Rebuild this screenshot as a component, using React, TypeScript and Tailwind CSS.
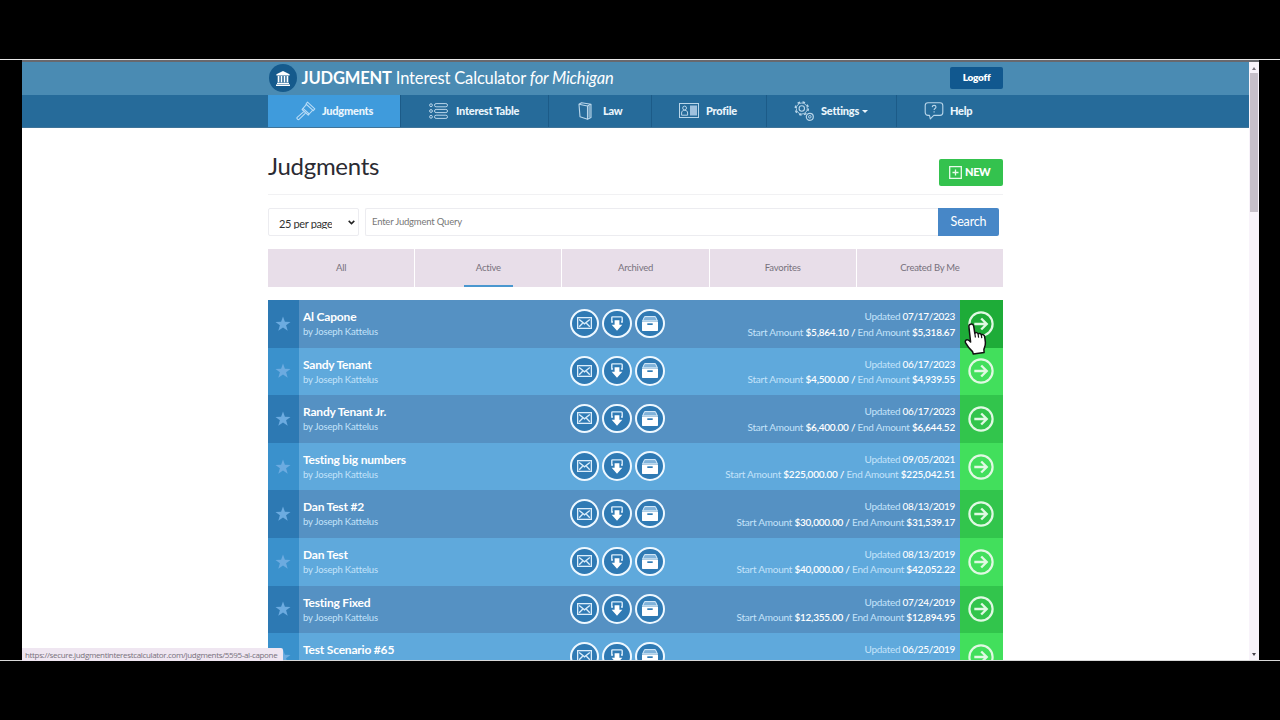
import type { ReactNode } from 'react'

type Judgment = {
  name: string
  author?: string
  updated: string
  start?: string
  end?: string
}

const navItems = [
  { label: 'Judgments', width: 'w-[133px]', pad: 'pl-[28px]', gap: 'gap-[6px]', icon: <GavelIcon />, active: true },
  { label: 'Interest Table', width: 'w-[148px]', pad: 'pl-[27px]', gap: 'gap-[8px]', icon: <ListIcon /> },
  { label: 'Law', width: 'w-[103px]', pad: 'pl-[26px]', gap: 'gap-[8px]', icon: <BookIcon /> },
  { label: 'Profile', width: 'w-[115px]', pad: 'pl-[27px]', gap: 'gap-[7px]', icon: <CardIcon /> },
  { label: 'Settings', width: 'w-[130px]', pad: 'pl-[27px]', gap: 'gap-[7px]', icon: <CogsIcon />, caret: true },
  { label: 'Help', width: 'w-[106px]', pad: 'pl-[27px]', gap: 'gap-[6px]', icon: <HelpIcon /> },
]

const tabs = ['All', 'Active', 'Archived', 'Favorites', 'Created By Me']

const judgments: Judgment[] = [
  { name: 'Al Capone', author: 'Joseph Kattelus', updated: '07/17/2023', start: '$5,864.10', end: '$5,318.67' },
  { name: 'Sandy Tenant', author: 'Joseph Kattelus', updated: '06/17/2023', start: '$4,500.00', end: '$4,939.55' },
  { name: 'Randy Tenant Jr.', author: 'Joseph Kattelus', updated: '06/17/2023', start: '$6,400.00', end: '$6,644.52' },
  { name: 'Testing big numbers', author: 'Joseph Kattelus', updated: '09/05/2021', start: '$225,000.00', end: '$225,042.51' },
  { name: 'Dan Test #2', author: 'Joseph Kattelus', updated: '08/13/2019', start: '$30,000.00', end: '$31,539.17' },
  { name: 'Dan Test', author: 'Joseph Kattelus', updated: '08/13/2019', start: '$40,000.00', end: '$42,052.22' },
  { name: 'Testing Fixed', author: 'Joseph Kattelus', updated: '07/24/2019', start: '$12,355.00', end: '$12,894.95' },
  { name: 'Test Scenario #65', updated: '06/25/2019' },
]

function GavelIcon() {
  return (
    <svg width="20" height="20" viewBox="0 0 20 20" fill="none" stroke="#b9dcf6" strokeWidth="1.1" strokeLinejoin="round">
      <path d="M11.500 1.200l7.300 6.600-1.500 1.800L10 3z" />
      <path d="M10.500 3.400L7 7.300l6.200 5.700 3.600-3.900" />
      <path d="M7.800 10.700l-6.600 5.600c-1 1.200.9 3 2.100 1.900l6.200-6" />
      <path d="M7 7.300l-.9 1.200 6.100 5.600 1-1.100" />
    </svg>
  )
}

function ListIcon() {
  return (
    <svg width="19" height="16" viewBox="0 0 19 16" fill="none" stroke="#b9d6ea" strokeWidth="1">
      {[2.2, 8, 13.8].map((y) => (
        <g key={y}>
          <circle cx="2" cy={y} r="1.4" />
          <rect x="5.5" y={y - 1.6} width="13" height="3.2" rx="1.6" />
        </g>
      ))}
    </svg>
  )
}

function BookIcon() {
  return (
    <svg width="19" height="20" viewBox="0 0 19 20" fill="none" stroke="#b9d6ea" strokeWidth="1.1" strokeLinejoin="round">
      <path d="M3 3.200L11.500 5v13.200L4 15.800z" />
      <path d="M3 3.200L5.500 1.800l9.500 1.400v13.400l-3.500 1.600M11.500 5L15 3.200" />
      <path d="M13.300 5v11.600" strokeWidth="2" opacity=".6" />
    </svg>
  )
}

function CardIcon() {
  return (
    <svg width="20" height="15" viewBox="0 0 20 15" fill="none" stroke="#b9d6ea" strokeWidth="1">
      <rect x=".5" y=".5" width="19" height="14" />
      <circle cx="5.6" cy="5" r="1.9" />
      <path d="M2.600 12.200V10c0-1.800 1-2.600 3-2.600s3 .8 3 2.600v2.200z" />
      <rect x="11" y="2.500" width="7" height="10" fill="#9fc1de" stroke="none" />
    </svg>
  )
}

function CogsIcon() {
  return (
    <svg width="20" height="20" viewBox="0 0 20 20" fill="none" stroke="#b9d6ea">
      <circle cx="7.800" cy="7.500" r="6.500" strokeWidth="1.500" strokeDasharray="2.550 2.550" />
      <circle cx="7.800" cy="7.500" r="5.500" strokeWidth=".9" />
      <circle cx="7.800" cy="7.500" r="2.700" strokeWidth="1.1" />
      <circle cx="15.800" cy="15.800" r="3.500" strokeWidth="1.200" />
      <circle cx="15.800" cy="15.800" r="1.300" strokeWidth="1" />
    </svg>
  )
}

function HelpIcon() {
  return (
    <svg width="20" height="18" viewBox="0 0 20 18" fill="none" stroke="#b9d6ea" strokeWidth="1.1" strokeLinejoin="round">
      <path d="M4 .8h12c1.6 0 2.8 1.2 2.8 2.8v7c0 1.6-1.2 2.8-2.8 2.8H9.8l-3.500 3.400-.8-3.400H4c-1.600 0-2.800-1.200-2.800-2.800v-7C1.200 2 2.400.8 4 .8z" />
      <path d="M8.200 5.100c.1-1.200.9-1.700 1.900-1.700 1.100 0 1.900.6 1.900 1.600 0 1.500-1.900 1.500-1.900 3M10.100 9.200v1.400" />
    </svg>
  )
}

function BankIcon() {
  return (
    <svg width="14" height="15" viewBox="0 0 14 15" fill="#fff">
      <path d="M7 0l6.600 3.200v1.200H.4V3.200zM1 11.800h12v1.100H1zM0 13.500h14V15H0zM1.700 5h1.700v6.300H1.700zM4.700 5h1.600v6.300H4.700zM7.700 5h1.600v6.300H7.700zM10.600 5h1.700v6.300h-1.700z" />
    </svg>
  )
}

function MailIcon() {
  return (
    <svg width="15" height="12" viewBox="0 0 15 12" fill="none" stroke="#dceefb" strokeWidth="1.300">
      <rect x=".650" y=".650" width="13.700" height="10.700" />
      <path d="M2.200 2.400l5.300 4.400 5.300-4.400M2.200 9.800l3.400-3.600M12.800 9.800L9.400 6.200" />
    </svg>
  )
}

function DownloadIcon() {
  return (
    <svg width="14" height="15" viewBox="0 0 14 15">
      <path d="M3 6H1.800V1.700c0-.5.300-.8.800-.8h8.800c.5 0 .8.300.8.800V6H11" fill="none" stroke="#dceefb" strokeWidth="1.400" />
      <path d="M4.600 4.200h4.800v4.600h2.900L7 14.700 1.700 8.800h2.900z" fill="#fff" />
    </svg>
  )
}

function ArchiveIcon() {
  return (
    <svg width="16" height="15" viewBox="0 0 16 15">
      <path d="M2.600.6h10.800l2 4.200H.6z" fill="#7fb2da" stroke="#dceefb" strokeWidth="1" />
      <path d="M0 5.400h16V14c0 .6-.4 1-1 1H1c-.6 0-1-.4-1-1z" fill="#fff" />
      <path d="M5.300 7.300h5.400v1.700H5.300z" fill="#2f7ab4" />
    </svg>
  )
}

function ArrowIcon() {
  return (
    <svg width="26" height="26" viewBox="0 0 26 26" fill="none" stroke="#e0f9e3" strokeWidth="2.200">
      <circle cx="13" cy="13" r="11.600" />
      <path d="M6.300 13h12.500M13.200 7.500l5.500 5.500-5.500 5.500" strokeWidth="2.400" />
    </svg>
  )
}

function HandCursor() {
  return (
    <svg className="absolute left-[963px] top-[322px]" width="25" height="34" viewBox="0 0 25 34">
      <path
        d="M7.500 2.200c1.500-.6 2.900.3 3.200 1.900l1.100 7c1.200-.9 2.700-.6 3.300.7 1.300-.8 2.700-.3 3.200 1 1.600-.6 3.100.2 3.400 2l.7 5.400c.3 3-.8 5-1.500 7.100l.2 3.200-10.800 1.600-.8-2.500c-2.200-2-4.800-4.900-6.900-8.700-.8-1.500 0-2.900 1.300-3.100 1.400-.2 2.600.8 3.700 2.200L5.900 4.600c-.2-1.100.4-2 1.600-2.400z"
        fill="#fff"
        stroke="#111"
        strokeWidth="1.500"
        strokeLinejoin="round"
      />
      <path d="M11.800 11l.6 4.500M15.100 12l.5 3.700M18.300 13l.5 3.200" stroke="#111" strokeWidth="1.200" />
    </svg>
  )
}

function RoundButton({ children }: { children: ReactNode }) {
  return (
    <button className="flex size-[29.500px] items-center justify-center rounded-full border-2 border-[#eef8ff] bg-[#2f7ab4]">
      {children}
    </button>
  )
}

function Header() {
  return (
    <header className="shrink-0">
      <div className="h-[32.500px] bg-[#4a8bb3]">
        <div className="ml-[246px] flex h-8 w-[735px] items-center">
          <span className="ml-[0.500px] flex size-7 items-center justify-center rounded-full bg-[#155a8c]">
            <BankIcon />
          </span>
          <h1 className="ml-[5px] whitespace-nowrap text-[16.500px] leading-8 tracking-[-0.160px] text-white">
            <b>JUDGMENT</b> Interest Calculator <i>for Michigan</i>
          </h1>
          <button className="ml-auto h-[22px] w-[53px] rounded-[2px] bg-[#11588f] pb-px text-[10px] font-extrabold tracking-[-0.250px] text-white">
            Logoff
          </button>
        </div>
      </div>
      <nav className="h-[33px] border-b border-[#3f7499] bg-[#266b9a]">
        <ul className="ml-[246px] flex h-full w-[735px]">
          {navItems.map((item) => (
            <li
              key={item.label}
              className={`flex items-center border-r border-[#1c5b88] last:border-r-0 ${item.width} ${item.pad} ${item.gap} ${item.active ? 'bg-[#3f9bdc]' : ''}`}
            >
              <span className="flex w-5 shrink-0 justify-center">{item.icon}</span>
              <a className="flex items-center whitespace-nowrap pt-px text-[11px] font-black tracking-[-0.250px] text-[#eaf5fc]">
                {item.label}
                {item.caret && <span className="ml-[3px] mt-px border-x-[3px] border-t-[3px] border-x-transparent border-t-[#eaf5fc]" />}
              </a>
            </li>
          ))}
        </ul>
      </nav>
    </header>
  )
}

function SearchBar() {
  return (
    <div className="mt-[13px] flex h-7 w-[731px]">
      <div className="flex w-[91px] items-center justify-between rounded-[2px] border border-[#ececf0] pl-[10px] pr-[3px] text-[11px] tracking-[-0.350px] text-[#333]">
        <span className="h-[14px] overflow-hidden leading-[17px]">25 per page</span>
        <svg width="7" height="5" viewBox="0 0 7 5" fill="none" stroke="#222" strokeWidth="1.500">
          <path d="M.7.900l2.800 2.700L6.300.900" />
        </svg>
      </div>
      <div className="ml-[6px] flex flex-1 items-center rounded-l-[2px] border border-r-0 border-[#ececf0] pl-[6px] pt-px text-[9.500px] tracking-[-0.200px] text-[#777]">
        Enter Judgment Query
      </div>
      <button className="w-[61px] rounded-r-[2px] bg-[#4787c7] text-[12.500px] tracking-[-0.150px] text-white">Search</button>
    </div>
  )
}

function JudgmentRow({ judgment, index }: { judgment: Judgment; index: number }) {
  const odd = index % 2 === 1
  const go = index === 0 ? 'bg-[#1eac38]' : odd ? 'bg-[#42df5c]' : 'bg-[#32c54c]'
  return (
    <li className={`flex h-[47.600px] shrink-0 ${odd ? 'bg-[#5fa9dc]' : 'bg-[#5591c3]'}`}>
      <div className={`flex w-[31px] items-center justify-center pr-px ${odd ? 'bg-[#3a91cc]' : 'bg-[#2d79b3]'}`}>
        <svg width="16" height="16" viewBox="0 0 16 16" fill="#6cabe0">
          <path d="M8 .5l1.900 5.200 5.600.2-4.400 3.400 1.600 5.400L8 11.600l-4.700 3.100 1.600-5.400L.5 5.900l5.600-.2z" />
        </svg>
      </div>
      <div className="w-[270.500px] pl-1 pt-[9px]">
        <div className="text-[12px] font-bold leading-4 tracking-[-0.200px] text-white">{judgment.name}</div>
        {judgment.author && (
          <div className="text-[9.500px] leading-[14px] tracking-[-0.160px] text-[#c4e3fa]">by {judgment.author}</div>
        )}
      </div>
      <div className="flex w-[96px] items-center gap-[3.400px] pb-[1px]">
        <RoundButton><MailIcon /></RoundButton>
        <RoundButton><DownloadIcon /></RoundButton>
        <RoundButton><ArchiveIcon /></RoundButton>
      </div>
      <div className="flex-1 whitespace-nowrap pr-[5px] pt-[9px] text-right text-[10px] leading-[15.500px] tracking-[-0.240px] text-[#c4e3fa]">
        <div className="tracking-[-0.300px]">
          Updated <span className="font-medium text-white">{judgment.updated}</span>
        </div>
        {judgment.start && (
          <div>
            Start Amount <span className="font-semibold text-white">{judgment.start} /</span> End Amount{' '}
            <span className="font-semibold text-white">{judgment.end}</span>
          </div>
        )}
      </div>
      <div className={`flex w-[43px] items-center justify-center pr-[2px] ${go}`}>
        <ArrowIcon />
      </div>
    </li>
  )
}

export default function App() {
  return (
    <div className="relative flex h-[720px] w-[1280px] flex-col overflow-hidden bg-black font-['Lato',sans-serif]">
      <div className="mt-[59px] h-px bg-[#e8e8e8]" />
      <div className="ml-[22px] h-[2px] w-[1237px] bg-[#68686e]" />
      <div className="ml-[22px] flex h-[598px] w-[1237px]">
        <div className="flex w-[1227px] flex-col overflow-hidden bg-white">
          <Header />
          <main className="ml-[246px] flex w-[735px] flex-col">
            <div className="flex h-[67.500px] shrink-0 justify-between border-b border-[#f1f1f3]">
              <h2 className="mt-[23.500px] text-[24px] leading-[30px] tracking-[-0.300px] text-[#2b2b33]">Judgments</h2>
              <button className="mt-[31.500px] flex h-[27px] w-[64px] items-center gap-[3px] rounded-[2px] bg-[#34c24e] pl-[10px] text-[11px] font-black tracking-[-0.350px] text-white">
                <svg width="13" height="13" viewBox="0 0 13 13" fill="none" stroke="#e8fbea" strokeWidth="1.300">
                  <path d="M.7.700h11.600v11.600H.7zM6.500 3.500v6M3.500 6.500h6" />
                </svg>
                NEW
              </button>
            </div>
            <SearchBar />
            <div className="mt-[13px] flex h-[38px] shrink-0 gap-px">
              {tabs.map((tab) => (
                <div
                  key={tab}
                  className="relative flex flex-1 items-center justify-center bg-[#e8dee9] pt-px text-[9.500px] tracking-[-0.220px] text-[#77717c]"
                >
                  {tab}
                  {tab === 'Active' && <span className="absolute bottom-0 h-[2px] w-[49px] bg-[#4a97cf]" />}
                </div>
              ))}
            </div>
            <ul className="mt-[13px]">
              {judgments.map((judgment, i) => (
                <JudgmentRow key={judgment.name} judgment={judgment} index={i} />
              ))}
            </ul>
          </main>
        </div>
        <div className="flex w-[10px] flex-col items-center bg-[#f8f3fa]">
          <span className="mt-[5px] border-x-[2px] border-b-[3px] border-x-transparent border-b-[#77717c]" />
          <div className="mt-[3px] h-[139px] w-[8px] bg-[#c6bfc9]" />
          <span className="mb-[4px] mt-auto border-x-[2px] border-t-[3px] border-x-transparent border-t-[#44404a]" />
        </div>
      </div>
      <div className="h-px bg-[#d8d8d8]" />
      <div className="absolute left-[22px] top-[648px] flex h-[13px] w-[261px] items-center whitespace-nowrap rounded-tr-[2px] bg-[#efe6f1] pl-[3px] font-['Open_Sans',sans-serif] text-[8px] tracking-[-0.340px] text-[#77717c]">
        https://secure.judgmentinterestcalculator.com/judgments/5595-al-capone
      </div>
      <HandCursor />
    </div>
  )
}
